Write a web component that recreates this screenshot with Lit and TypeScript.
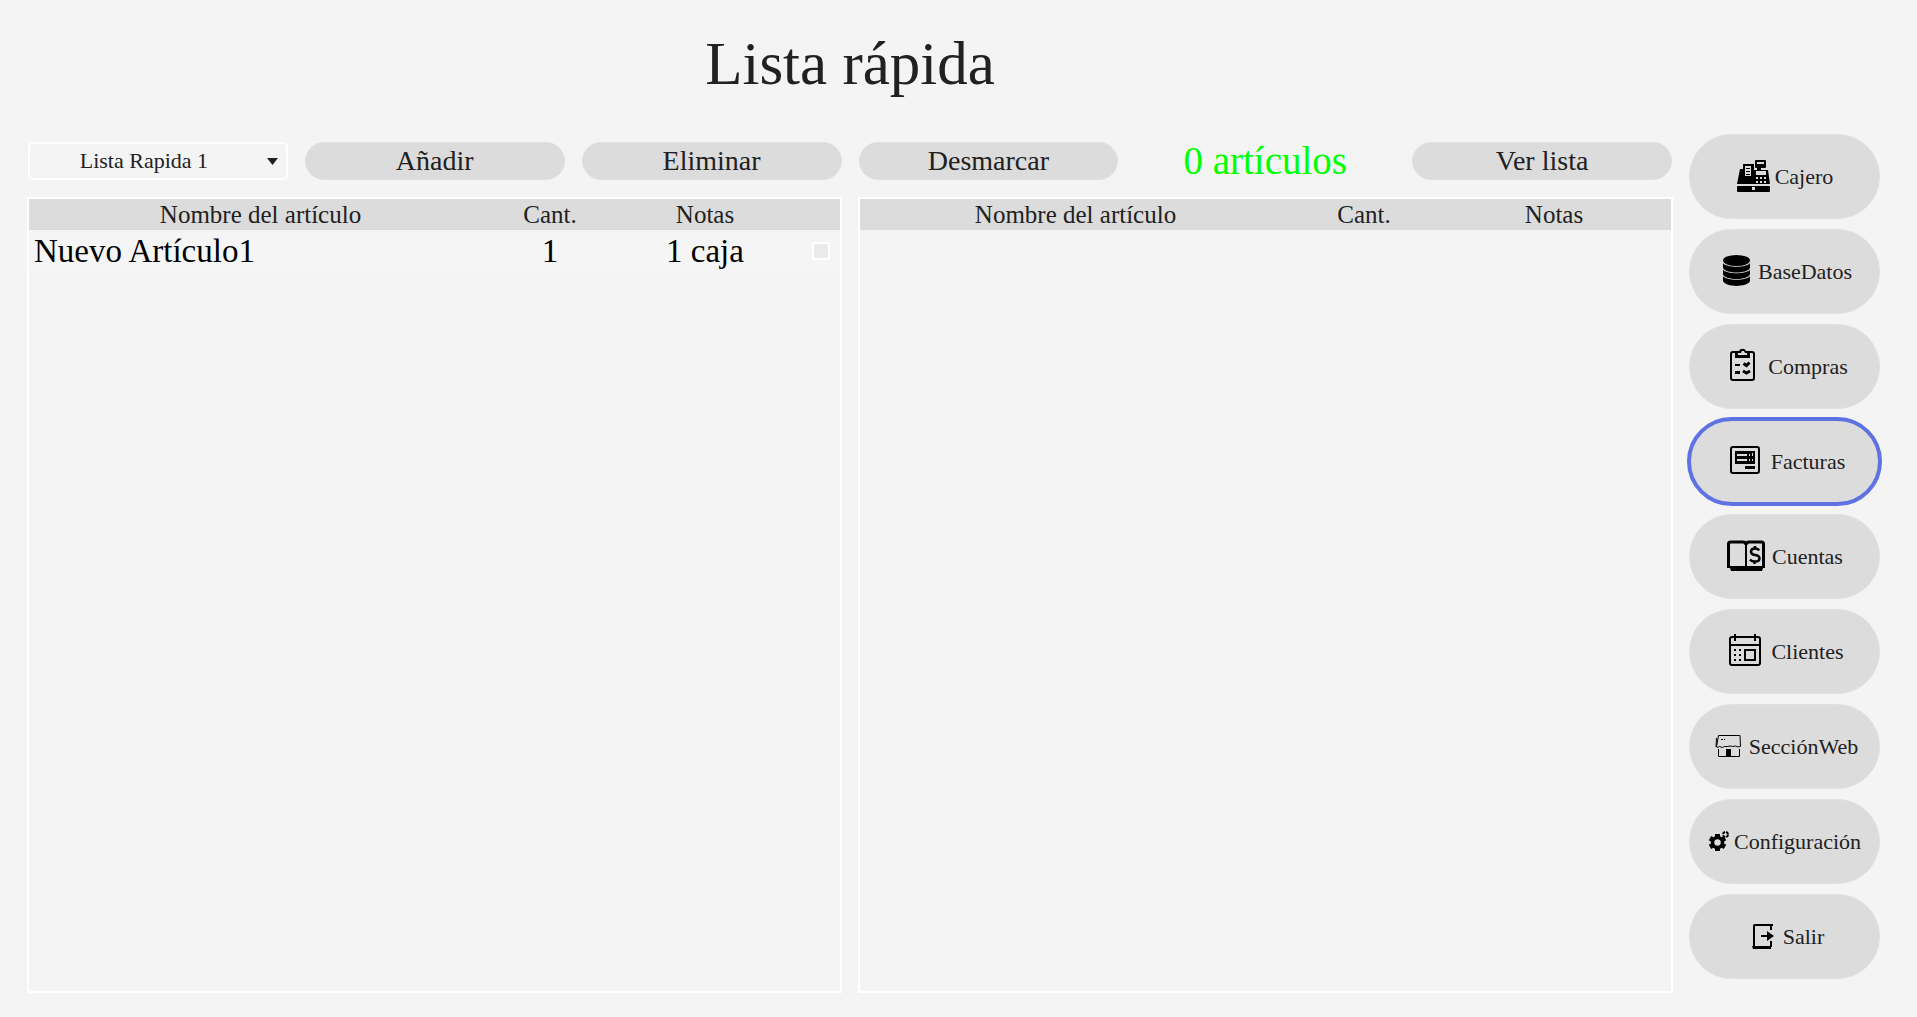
import { LitElement, html, css, svg } from "lit";
import { customElement, property, state } from "lit/decorators.js";
import { classMap } from "lit/directives/class-map.js";

interface NavItem {
  id: string;
  label: string;
  width: number;
  icon: unknown;
}

interface Article {
  name: string;
  qty: string;
  notes: string;
}

const HOLE = "#dcdcdc";

const cajero = svg`
  <path d="M20 4h9q1 0 1 1v6q0 1-1 1h-4v2h-4v-2h-1q-1 0-1-1V5q0-1 1-1z"/>
  <path d="M7 8h11v6h14l2 14H1L4 13h3z"/>
  <rect x="1" y="30" width="33" height="6" rx="1"/>
  <g fill=${HOLE}>
    <rect x="21" y="6" width="7" height="2"/>
    <path d="M9 10h6v10H9z"/>
    <path d="M20 15h10v4H20z"/>
    <path d="M20 21h2v2h-2zM24 21h2v2h-2zM28 21h2v2h-2zM20 25h2v2h-2zM24 25h2v2h-2zM28 25h2v2h-2z"/>
    <rect x="16" y="31" width="3" height="3"/>
  </g>
  <path d="M10 12h4v1h-4zM10 15h4v1h-4zM10 18h4v1h-4z"/>`;

const base = svg`
  <ellipse cx="19.500" cy="9.500" rx="13.500" ry="5.500"/>
  <path d="M6 12c3 5 24 5 27 0v5c-3 6-24 6-27 0z"/>
  <path d="M6 18.500c3 5 24 5 27 0v5c-3 6-24 6-27 0z"/>
  <path d="M6 25c3 5 24 5 27 0v5c-3 6.500-24 6.500-27 0z"/>`;

const compras = svg`
  <rect x="10" y="6" width="23" height="28" rx="2" fill="none" stroke="#000" stroke-width="2"/>
  <path d="M14 5h4c1-3 6-3 7 0h4v7H14z"/>
  <path d="M17 7h3l1-2h2l1 2h2v2h-9z" fill=${HOLE}/>
  <path d="M14 18h5v2h-5zM14 25h5v3h-5z"/>
  <path d="M22.500 17.500l3 2 3-3M22 25l3.500 2 3.500-2" fill="none" stroke="#000" stroke-width="3"/>`;

const facturas = svg`
  <rect x="7" y="6" width="28" height="26" rx="2" fill="none" stroke="#000" stroke-width="2"/>
  <path d="M11 10h20v13H11z"/>
  <path d="M13 13h10v2H13zM13 18h10v2H13zM25 13h1v2h-1zM25 18h1v2h-1zM28 12h1v3h-1zM28 18h1v2h-1z" fill=${HOLE}/>
  <path d="M21 25h10v3H21z"/>`;

const cuentas = svg`
  <path d="M2.500 31V8q0-2 2-2H17q3 0 3 3 0-3 3-3h12.500q2 0 2 2V31" fill="none" stroke="#000" stroke-width="3"/>
  <path d="M20 8v23" stroke="#000" stroke-width="2"/>
  <path d="M1 30h38v2h-2l-1 3H5l-1-3H1z"/>
  <path d="M33 14.500q-1-2-4-2-4 0-4 3t4 3.500q4.500.500 4.500 3.500t-4.500 3q-3.500 0-5-2M29 10v3M28.500 25v3" fill="none" stroke="#000" stroke-width="2.500"/>`;

const clientes = svg`
  <rect x="5" y="6" width="30" height="28" rx="2" fill="none" stroke="#000" stroke-width="2"/>
  <path d="M5 13h30v2H5zM9 3h2v7H9zM29 3h2v7h-2z"/>
  <path d="M9 18h2v2H9zM14 18h2v2h-2zM9 23h2v2H9zM14 23h2v2h-2zM9 28h2v2H9zM14 28h2v2h-2z"/>
  <rect x="20" y="19" width="10" height="10" fill="none" stroke="#000" stroke-width="2"/>`;

const web = svg`
  <path d="M7.500 9.500h21.500l.500 11q-3 1-5-.500-3 1-5.500 0-3 1-5.500.500-2 2-5 0-1.500 1.500-3 .500z" fill="none" stroke="#000"/>
  <path d="M5.500 12l-.500 9" stroke="#000"/>
  <path d="M7.500 23v7.500h21V23" fill="none" stroke="#000"/>
  <path d="M15 23h5v8h-5z"/>
  <path d="M10 13h2v1h-2zM13 13h1v1h-1z"/>`;

const config = svg`
  <circle cx="9.500" cy="21.500" r="5" fill="none" stroke="#000" stroke-width="3.500"/>
  <g stroke="#000" stroke-width="5">
    <path d="M9.500 13v3M9.500 27v3M2 17.200l2.600 1.500M14.400 24.300l2.600 1.500M17 17.200l-2.600 1.500M2 25.800l2.600-1.500"/>
  </g>
  <circle cx="17.500" cy="13.500" r="2.500" fill="none" stroke="#000" stroke-width="2" stroke-dasharray="3 1"/>`;

const salir = svg`
  <path d="M26 14V9.500q0-.500-1-.500H9.500Q9 9 9 10v20" fill="none" stroke="#000" stroke-width="2"/>
  <path d="M25 8h3v2h-3zM7 30h19v3H8zM25 25h2v6h-2z"/>
  <path d="M16 19h6v-4l7 5-7 5v-4h-6z"/>`;

const NAV: NavItem[] = [
  { id: "cajero", label: "Cajero", width: 35, icon: cajero },
  { id: "base", label: "BaseDatos", width: 37, icon: base },
  { id: "compras", label: "Compras", width: 43, icon: compras },
  { id: "facturas", label: "Facturas", width: 43, icon: facturas },
  { id: "cuentas", label: "Cuentas", width: 42, icon: cuentas },
  { id: "clientes", label: "Clientes", width: 42, icon: clientes },
  { id: "web", label: "SecciónWeb", width: 34, icon: web },
  { id: "config", label: "Configuración", width: 22, icon: config },
  { id: "salir", label: "Salir", width: 34, icon: salir },
];

@customElement("side-nav")
class SideNav extends LitElement {
  @property() selected = "";

  static styles = css`
    :host {
      display: block;
    }
    .nav {
      display: flex;
      flex-direction: column;
      gap: 10px;
    }
    .item {
      display: flex;
      align-items: center;
      justify-content: center;
      gap: 4px;
      height: 85px;
      padding: 0;
      border: 1px solid #e0e0e0;
      border-radius: 43px;
      background: #dcdcdc;
      color: #212121;
      font: 22px/26px "Liberation Serif", serif;
      cursor: pointer;
    }
    .item.active {
      outline: 4px solid #5e72e4;
      outline-offset: -2px;
    }
    .icon {
      display: block;
      flex: none;
    }
  `;

  render() {
    return html`<nav class="nav">
      ${NAV.map(
        (n) => html`<button
          type="button"
          class=${classMap({ item: true, active: n.id === this.selected })}
          @click=${() => this.dispatchEvent(new CustomEvent("pick", { detail: n.id }))}
        >
          <svg class="icon" width=${n.width} height="41" viewBox="0 0 ${n.width} 41" aria-hidden="true">${n.icon}</svg>
          <span>${n.label}</span>
        </button>`
      )}
    </nav>`;
  }
}

@customElement("article-table")
class ArticleTable extends LitElement {
  @property({ attribute: false }) rows: Article[] = [];
  @property({ type: Boolean }) selectable = false;

  static styles = css`
    :host {
      display: block;
      border: 2px solid #ffffff;
    }
    .table {
      width: 100%;
      table-layout: fixed;
      border-collapse: collapse;
      color: #000000;
    }
    .qty {
      width: 146px;
    }
    .notes {
      width: 234px;
    }
    .with-check .qty {
      width: 116px;
    }
    .with-check .notes {
      width: 194px;
    }
    .check {
      width: 38px;
    }
    .head {
      height: 31px;
      padding: 0;
      background: #dcdcdc;
      color: #212121;
      font-size: 25px;
      line-height: 30px;
      font-weight: 400;
    }
    .cell {
      height: 41px;
      padding: 0;
      background: #f5f5f5;
      text-align: center;
      font-size: 33px;
      line-height: 40px;
    }
    .cell.left {
      padding-left: 5px;
      text-align: left;
    }
    .box {
      appearance: none;
      display: block;
      width: 18px;
      height: 18px;
      margin: 0 10px;
      border: 2px solid #ffffff;
      border-radius: 3px;
      background: #ebebeb;
    }
    .box:checked {
      background: #5e72e4;
    }
  `;

  render() {
    return html`<table class=${classMap({ table: true, "with-check": this.selectable })}>
      <colgroup>
        <col />
        <col class="qty" />
        <col class="notes" />
        ${this.selectable ? html`<col class="check" />` : ""}
      </colgroup>
      <thead>
        <tr>
          <th class="head" scope="col">Nombre del artículo</th>
          <th class="head" scope="col">Cant.</th>
          <th class="head" scope="col">Notas</th>
          ${this.selectable ? html`<td class="head"></td>` : ""}
        </tr>
      </thead>
      <tbody>
        ${this.rows.map(
          (r) => html`<tr>
            <td class="cell left">${r.name}</td>
            <td class="cell">${r.qty}</td>
            <td class="cell">${r.notes}</td>
            ${this.selectable
              ? html`<td class="cell"><input class="box" type="checkbox" aria-label=${r.name} /></td>`
              : ""}
          </tr>`
        )}
      </tbody>
    </table>`;
  }
}

@customElement("app-root")
class AppRoot extends LitElement {
  @state() private section = "facturas";
  @state() private rows: Article[] = [{ name: "Nuevo Artículo1", qty: "1", notes: "1 caja" }];
  @state() private list: Article[] = [];

  static styles = css`
    :host {
      display: block;
      background: #f4f4f4;
      color: #212121;
      font-family: "Liberation Serif", serif;
    }
    .page {
      box-sizing: border-box;
      min-height: 100vh;
      display: grid;
      grid-template-columns: minmax(0, 1fr) 191px;
      gap: 16px;
      padding: 0 37px 24px 27px;
    }
    .main {
      display: flex;
      flex-direction: column;
    }
    .title {
      margin: 0;
      padding: 28px 0 42px;
      text-align: center;
      font-size: 61px;
      line-height: 72px;
      font-weight: 400;
    }
    .toolbar {
      display: grid;
      grid-template-columns: repeat(6, minmax(0, 1fr));
      gap: 17px;
      height: 38px;
      padding: 0 1px;
      margin-bottom: 17px;
    }
    .action {
      padding: 0;
      border: 1px solid #e0e0e0;
      border-radius: 19px;
      background: #dcdcdc;
      color: inherit;
      font: 28px/32px "Liberation Serif", serif;
      cursor: pointer;
    }
    .count {
      align-self: center;
      color: #00ff00;
      text-align: center;
      font-size: 39px;
      line-height: 38px;
    }
    .picker {
      position: relative;
      display: flex;
    }
    .select {
      appearance: none;
      width: 100%;
      padding: 0 28px 0 0;
      border: 2px solid #ffffff;
      border-radius: 5px;
      background: transparent;
      color: inherit;
      font: 22px/26px "Liberation Serif", serif;
      text-align: center;
      text-align-last: center;
    }
    .arrow {
      position: absolute;
      right: 10px;
      top: 16px;
      pointer-events: none;
    }
    .tables {
      flex: 1;
      display: grid;
      grid-template-columns: repeat(2, minmax(0, 1fr));
      gap: 16px;
    }
    .side {
      padding-top: 134px;
    }
  `;

  render() {
    return html`<div class="page">
      <main class="main">
        <h1 class="title">Lista rápida</h1>
        <div class="toolbar">
          <div class="picker">
            <select class="select" aria-label="Lista">
              <option>Lista Rapida 1</option>
            </select>
            <svg class="arrow" width="11" height="7" viewBox="0 0 11 7" aria-hidden="true">
              <path d="M0 0h11L5.500 7z" fill="#212121" />
            </svg>
          </div>
          <button type="button" class="action">Añadir</button>
          <button type="button" class="action">Eliminar</button>
          <button type="button" class="action">Desmarcar</button>
          <output class="count">${this.list.length} artículos</output>
          <button type="button" class="action">Ver lista</button>
        </div>
        <div class="tables">
          <article-table selectable .rows=${this.rows}></article-table>
          <article-table .rows=${this.list}></article-table>
        </div>
      </main>
      <side-nav
        class="side"
        .selected=${this.section}
        @pick=${(e: CustomEvent<string>) => (this.section = e.detail)}
      ></side-nav>
    </div>`;
  }
}
